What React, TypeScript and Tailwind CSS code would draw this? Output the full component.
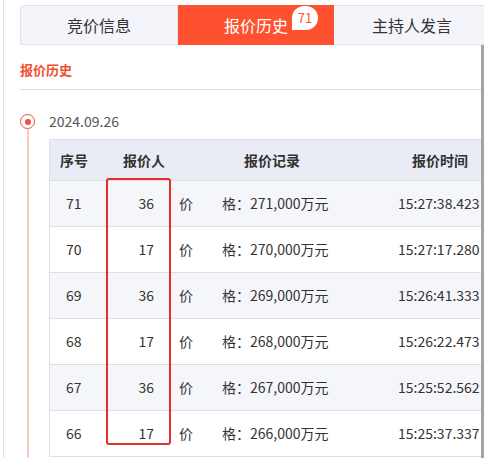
const rows = [
  { no: '71', who: '36', price: '271,000万元', time: '15:27:38.423' },
  { no: '70', who: '17', price: '270,000万元', time: '15:27:17.280' },
  { no: '69', who: '36', price: '269,000万元', time: '15:26:41.333' },
  { no: '68', who: '17', price: '268,000万元', time: '15:26:22.473' },
  { no: '67', who: '36', price: '267,000万元', time: '15:25:52.562' },
  { no: '66', who: '17', price: '266,000万元', time: '15:25:37.337' },
]

function Tabs(): JSX.Element {
  return (
    <div className="flex h-[40px] text-[16px] leading-[20px]">
      <div className="flex w-[158px] shrink-0 items-center justify-center rounded-tl-[4px] border border-[#e1e4ea] bg-[#f3f5fa] text-[#333]">
        竞价信息
      </div>
      <div className="relative flex w-[156px] shrink-0 items-center justify-center bg-[#fe512f] text-white">
        报价历史
        <span className="absolute left-[114px] top-[1px] flex h-[24px] w-[26px] items-center justify-center rounded-tl-full rounded-tr-full rounded-br-full rounded-bl-[4px] bg-white text-[13px] text-[#fe512f]">
          71
        </span>
      </div>
      <div className="flex w-[156px] shrink-0 items-center justify-center border-y border-[#e1e4ea] bg-[#f3f5fa] text-[#333]">
        主持人发言
      </div>
    </div>
  )
}

function BidTable(): JSX.Element {
  return (
    <div className="w-[480px] border-l border-[#dcdfe6] text-[14px] text-[#333]">
      <div className="flex h-[42px] items-center border-y border-[#dcdfe6] bg-[#e9ecf4] font-bold">
        <div className="w-[57px] shrink-0 pl-[10px]">序号</div>
        <div className="w-[71px] shrink-0 pl-[16px]">报价人</div>
        <div className="w-[220px] shrink-0 pl-[66px]">报价记录</div>
        <div className="shrink-0 pl-[14px]">报价时间</div>
      </div>
      {rows.map((r, i) => (
        <div
          key={r.no}
          className={`flex h-[46px] items-center border-b border-[#dcdfe6] ${
            i % 2 === 0 ? 'bg-[#f5f6fa]' : 'bg-white'
          }`}
        >
          <div className="w-[57px] shrink-0 pl-[16px]">{r.no}</div>
          <div className="w-[71px] shrink-0 pr-[24px] text-right">{r.who}</div>
          <div className="flex w-[220px] shrink-0 pl-[1px]">
            <span className="w-[43px]">价</span>
            <span>格：{r.price}</span>
          </div>
          <div className="shrink-0 whitespace-nowrap">{r.time}</div>
        </div>
      ))}
    </div>
  )
}

export default function App(): JSX.Element {
  return (
    <div
      className="relative h-[458px] w-[484px] overflow-hidden bg-white"
      style={{ fontFamily: '"Noto Sans CJK SC", sans-serif' }}
    >
      <div className="ml-[3px] flex h-full flex-col border-l border-[#e0e0e0] pl-[16px]">
        <div className="mt-[5px] overflow-hidden">
          <Tabs />
        </div>
        <div className="flex min-h-0 flex-1">
          <div className="min-w-0 flex-1 overflow-hidden">
            <div className="pt-[15px] text-[13px] font-bold leading-[20px] text-[#f0502e]">报价历史</div>
            <div className="mt-[9px] border-t border-[#dcdcdc]" />
            <div className="mt-[24px] flex">
              <div className="flex w-[29px] shrink-0 flex-col">
                <div className="flex h-[15px] w-[15px] items-center justify-center rounded-full border-[1.5px] border-[#f0503a] bg-white">
                  <div className="h-[6px] w-[6px] rounded-full bg-[#f0503a]" />
                </div>
                <div className="ml-[6.5px] h-[400px] w-[2px] bg-[#f9c9c0]" />
              </div>
              <div className="min-w-0 flex-1">
                <div className="flex h-[15px] items-center text-[14px] text-[#555]">2024.09.26</div>
                <div className="mt-[10px]">
                  <BidTable />
                </div>
              </div>
            </div>
          </div>
          <div className="w-[3px] shrink-0 bg-[#a3a3a3]" />
        </div>
      </div>
      <div className="absolute left-[106px] top-[178px] h-[267px] w-[65px] rounded-[3px] border-2 border-[#e3302a]" />
    </div>
  )
}
